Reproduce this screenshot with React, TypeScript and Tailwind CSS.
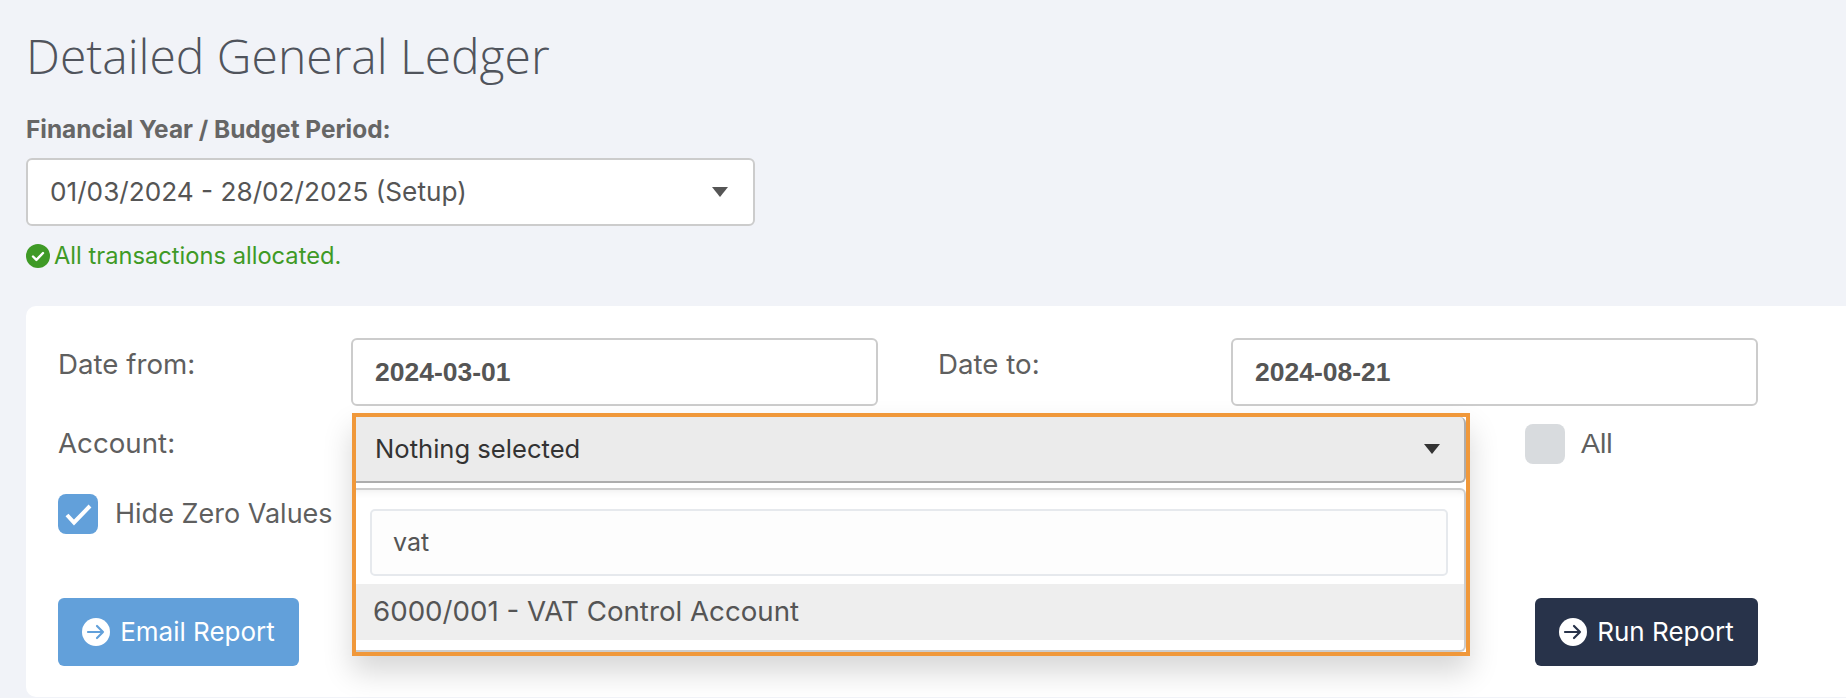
import type { ReactNode } from 'react';

const sans = 'font-["Inter",sans-serif]';

function CaretDown({ className }: { className: string }) {
  return (
    <svg className={className} viewBox="0 0 16 10" aria-hidden="true">
      <path d="M0 0h16L8 10z" fill="currentColor" />
    </svg>
  );
}

function ArrowCircle({ arrowColor }: { arrowColor: string }) {
  return (
    <svg className="h-7 w-7 shrink-0" viewBox="0 0 28 28" aria-hidden="true">
      <circle cx="14" cy="14" r="14" fill="#fff" />
      <path
        d="M6 14h15M15 8l6 6-6 6"
        fill="none"
        stroke={arrowColor}
        strokeWidth="2.2"
        strokeLinecap="round"
        strokeLinejoin="round"
      />
    </svg>
  );
}

function ReportButton({ className, arrowColor, children }: { className: string; arrowColor: string; children: ReactNode }) {
  return (
    <button className={`flex h-[68px] items-center justify-center gap-[10px] rounded-[6px] pb-[1px] text-[26px] text-white ${className}`}>
      <ArrowCircle arrowColor={arrowColor} />
      {children}
    </button>
  );
}

function DateInput({ value, className }: { value: string; className: string }) {
  return (
    <div
      className={`flex h-[68px] items-center rounded-[6px] border-2 border-[#ccc] bg-white pl-[22px] pt-[1px] font-["Liberation_Sans",sans-serif] text-[26.5px] font-bold text-[#555] ${className}`}
    >
      {value}
    </div>
  );
}

export default function App() {
  return (
    <div className={`h-[698px] w-[1846px] overflow-hidden bg-[#f1f3f8] pl-[26px] ${sans} text-[#5f5f5f]`}>
      <h1 className='h-[101px] pt-[22px] font-["Open_Sans",sans-serif] text-[48px] font-light leading-[68px] text-[#50545c]'>
        Detailed General Ledger
      </h1>
      <div className="h-[57px] pt-[14px] text-[24.4px] font-bold leading-[28px] text-[#666]">Financial Year / Budget Period:</div>

      <div className="flex h-[68px] w-[729px] items-center justify-between rounded-[6px] border-2 border-[#ccc] bg-white pb-[1px] pl-[22px] pr-[25px] text-[26.2px] text-[#555]">
        <span>01/03/2024 - 28/02/2025 (Setup)</span>
        <CaretDown className="h-[10px] w-4 text-[#555]" />
      </div>

      <div className="flex h-[80px] items-start gap-[4px] pt-[17px] text-[23.7px] leading-[26px] text-[#3f9a26]">
        <svg className="mt-[1px] h-6 w-6 shrink-0" viewBox="0 0 24 24" aria-hidden="true">
          <circle cx="12" cy="12" r="12" fill="#3f9a26" />
          <path d="M7 12.5l3.4 3.4L17 9" fill="none" stroke="#fff" strokeWidth="2.4" strokeLinecap="round" strokeLinejoin="round" />
        </svg>
        <span>All transactions allocated.</span>
      </div>

      <div className="h-[391px] rounded-l-[10px] bg-white pl-8 pt-8 text-[27.7px]">
        <div className="flex h-[68px]">
          <div className="w-[293px] pt-[8px] leading-[36px]">Date from:</div>
          <DateInput value="2024-03-01" className="w-[527px]" />
          <div className="w-[353px] pl-[60px] pt-[8px] leading-[36px]">Date to:</div>
          <DateInput value="2024-08-21" className="w-[527px]" />
        </div>

        <div className="mt-[7px] flex h-[74px]">
          <div className="w-[294px] pt-[12px] leading-[36px]">Account:</div>
          <div className="relative h-[74px] w-[1118px]">
            <div className="absolute left-0 top-0 z-10 h-[243px] w-[1118px] border-4 border-[#f0983a] bg-white shadow-[0_16px_28px_rgba(0,0,0,0.16)]">
              <div className="flex h-[66px] items-center justify-between rounded-r-[6px] border-2 border-l-0 border-t-0 border-[#adadad] bg-[#ebebeb] pb-[1px] pl-[19px] pr-[24px] text-[25.6px] text-[#333]">
                <span className="pt-[2px]">Nothing selected</span>
                <CaretDown className="h-[10px] w-4 text-[#333]" />
              </div>
              <div className="mt-[5px] h-[164px] rounded-r-[6px] border-2 border-l-0 border-[#ccc] bg-white pt-[19px] shadow-[inset_0_10px_10px_-10px_rgba(0,0,0,0.1)]">
                <div className="ml-[14px] mr-[16px] flex h-[67px] items-center rounded-[5px] border-2 border-[#e6e9ed] bg-[#fdfdfd] pl-[21px] text-[25px] text-[#555]">vat</div>
                <div className="mt-[8px] flex h-[56px] items-center bg-[#eee] pl-[17px] text-[#555]">6000/001 - VAT Control Account</div>
              </div>
            </div>
          </div>
          <div className="ml-[55px] mt-[11px] h-10 w-10 rounded-[8px] bg-[#d8dbde]" />
          <div className='pl-4 pt-[12px] font-["Liberation_Sans",sans-serif] text-[28.5px] leading-[36px]'>All</div>
        </div>

        <div className="mt-[7px] flex h-10 items-center gap-[17px] text-[27px]">
          <div className="flex h-10 w-10 items-center justify-center rounded-[8px] bg-[#62a0da]">
            <svg className="h-10 w-10" viewBox="0 0 40 40" aria-hidden="true">
              <path d="M9 21l7 7.5L32 12" fill="none" stroke="#fff" strokeWidth="4" />
            </svg>
          </div>
          <span>Hide Zero Values</span>
        </div>

        <div className="mt-16 flex w-[1700px] justify-between">
          <ReportButton className="w-[241px] bg-[#62a0da]" arrowColor="#62a0da">
            Email Report
          </ReportButton>
          <ReportButton className="w-[223px] bg-[#28334a]" arrowColor="#28334a">
            Run Report
          </ReportButton>
        </div>
      </div>
    </div>
  );
}
